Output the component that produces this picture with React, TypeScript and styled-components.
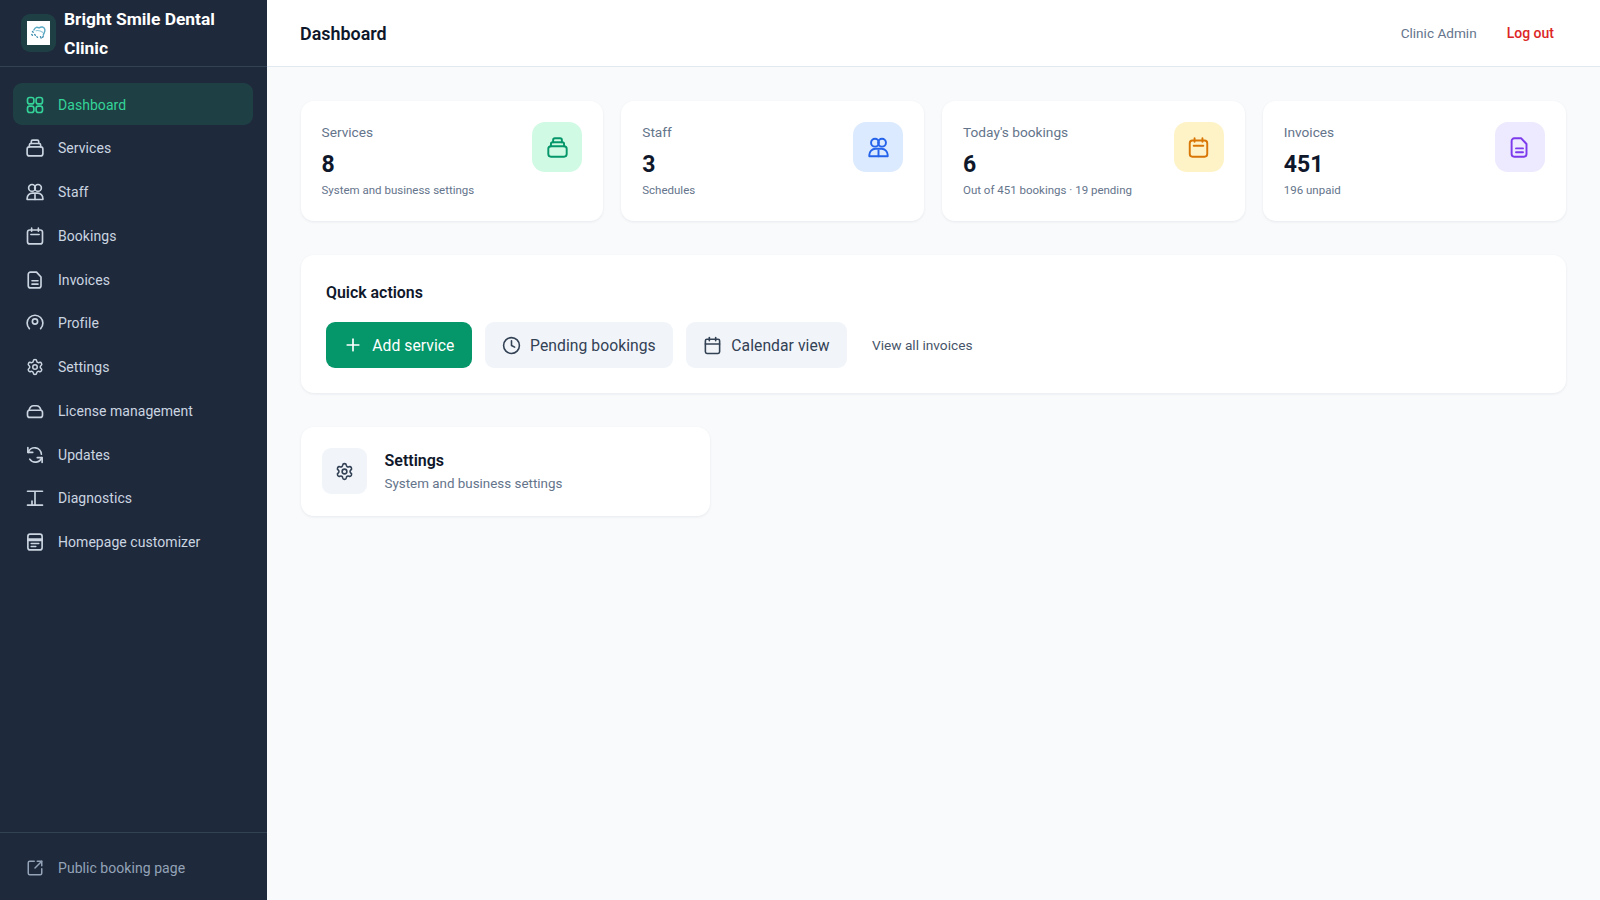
import React from "react";
import styled, { createGlobalStyle } from "styled-components";
import { Plus, Clock, Calendar, Settings as SettingsGear, SquareArrowOutUpRight } from "lucide-react";

const GlobalStyle = createGlobalStyle`
  html, body { margin: 0; padding: 0; height: 100%; }
  body {
    background: #f8fafc;
    font-family: Roboto, "Noto Sans", sans-serif;
    color: #0f172a;
  }
`;

const Shell = styled.div`
  display: flex;
  height: 900px;
  overflow: hidden;
`;

const Sidebar = styled.aside`
  width: 267px;
  flex: none;
  display: flex;
  flex-direction: column;
  background: #1e293b;
`;

const Brand = styled.div`
  height: 67px;
  flex: none;
  box-sizing: border-box;
  display: flex;
  align-items: center;
  gap: 8px;
  padding: 0 21px;
  border-bottom: 1px solid #334155;
`;

const LogoTile = styled.div`
  width: 35px;
  height: 38px;
  flex: none;
  display: flex;
  align-items: center;
  justify-content: center;
  border-radius: 9px;
  background: #1e4044;
`;

const LogoImage = styled.div`
  width: 23px;
  height: 24px;
  display: flex;
  align-items: center;
  justify-content: center;
  background: #fff;
`;

const BrandName = styled.div`
  margin-top: 1px;
  font-size: 17.4px;
  line-height: 29px;
  font-weight: 700;
  color: #fff;
`;

const Nav = styled.nav`
  flex: 1;
  padding: 16px 14px 16px 13px;
  display: flex;
  flex-direction: column;
  gap: 1.76px;
`;

const NavItem = styled.a<{ $active?: boolean }>`
  height: 42px;
  display: flex;
  align-items: center;
  gap: 14px;
  padding: 1px 14px 0 13px;
  box-sizing: border-box;
  border-radius: 9px;
  font-size: 14px;
  font-weight: 400;
  letter-spacing: 0.05px;
  background: ${(p) => (p.$active ? "#1e4044" : "transparent")};
  color: ${(p) => (p.$active ? "#34d399" : "#cbd5e1")};
  svg { flex: none; }
`;

const SidebarFooter = styled.div`
  height: 68px;
  flex: none;
  box-sizing: border-box;
  padding: 13px;
  border-top: 1px solid #334155;
`;

const FooterLink = styled(NavItem)`
  color: #94a3b8;
`;

const Main = styled.div`
  flex: 1;
  min-width: 0;
  display: flex;
  flex-direction: column;
`;

const TopBar = styled.header`
  height: 67px;
  flex: none;
  box-sizing: border-box;
  display: flex;
  align-items: center;
  justify-content: space-between;
  padding: 0 46px 0 33px;
  background: #fff;
  border-bottom: 1px solid #e2e8f0;
`;

const PageTitle = styled.h1`
  margin: 0;
  font-size: 17.9px;
  font-weight: 600;
  color: #0f172a;
`;

const TopActions = styled.div`
  display: flex;
  align-items: center;
  gap: 30px;
  font-size: 13.6px;
`;

const AdminName = styled.span`
  color: #64748b;
`;

const LogOut = styled.a`
  color: #dc2626;
  font-weight: 500;
  font-size: 14px;
`;

const Content = styled.main`
  flex: 1;
  padding: 34px 34.5px 34px 33.5px;
  display: flex;
  flex-direction: column;
  gap: 34px;
`;

const StatGrid = styled.section`
  display: grid;
  grid-template-columns: repeat(4, 1fr);
  gap: 18px;
`;

const Card = styled.div`
  background: #fff;
  border-radius: 13px;
  box-shadow: 0 1px 3px rgba(15, 23, 42, 0.07);
`;

const StatCard = styled(Card)`
  height: 120px;
  box-sizing: border-box;
  padding: 21px;
  display: flex;
  justify-content: space-between;
  align-items: flex-start;
`;

const StatLabel = styled.div`
  font-size: 13.7px;
  line-height: 20px;
  color: #64748b;
`;

const StatValue = styled.div`
  font-size: 23px;
  line-height: 32px;
  margin-top: 7px;
  font-weight: 700;
  color: #0f172a;
`;

const StatHint = styled.div`
  font-size: 11.5px;
  line-height: 16px;
  margin-top: 1px;
  color: #64748b;
`;

const StatIcon = styled.div<{ $bg: string; $fg: string }>`
  width: 50px;
  height: 50px;
  flex: none;
  display: flex;
  align-items: center;
  justify-content: center;
  border-radius: 13px;
  background: ${(p) => p.$bg};
  color: ${(p) => p.$fg};
`;

const QuickCard = styled(Card)`
  height: 138px;
  box-sizing: border-box;
  padding: 25px 25px 25px 25.5px;
`;

const QuickTitle = styled.h2`
  margin: 0 0 17px;
  font-size: 15.9px;
  line-height: 25px;
  font-weight: 600;
  color: #0f172a;
`;

const ActionRow = styled.div`
  display: flex;
  align-items: center;
  gap: 13px;
`;

const ActionButton = styled.a<{ $primary?: boolean }>`
  height: 46px;
  box-sizing: border-box;
  display: flex;
  align-items: center;
  gap: 9px;
  padding: 0 17.3px;
  border-radius: 9px;
  font-size: 15.7px;
  font-weight: 400;
  letter-spacing: 0.05px;
  background: ${(p) => (p.$primary ? "#059669" : "#f1f5f9")};
  color: ${(p) => (p.$primary ? "#fff" : "#334155")};
`;

const TextLink = styled.a`
  margin-left: 12px;
  font-size: 13.7px;
  font-weight: 400;
  color: #475569;
`;

const SettingsCard = styled(Card)`
  width: 409.5px;
  height: 88.5px;
  box-sizing: border-box;
  padding: 0 21px;
  display: flex;
  align-items: center;
  gap: 18px;
`;

const SettingsTile = styled.div`
  width: 45px;
  height: 46px;
  flex: none;
  display: flex;
  align-items: center;
  justify-content: center;
  border-radius: 9px;
  background: #f1f5f9;
  color: #334155;
`;

const SettingsName = styled.div`
  margin-top: 2px;
  font-size: 16px;
  line-height: 22px;
  font-weight: 600;
  color: #0f172a;
`;

const SettingsHint = styled.div`
  margin-top: 1px;
  font-size: 13.4px;
  line-height: 22px;
  color: #64748b;
`;

type IconProps = { size?: number };

const Svg = ({ size = 18, children }: IconProps & { children: React.ReactNode }) => (
  <svg
    width={size}
    height={size}
    viewBox="0 0 24 24"
    fill="none"
    stroke="currentColor"
    strokeWidth={2.2}
    strokeLinecap="round"
    strokeLinejoin="round"
  >
    {children}
  </svg>
);

const GridIcon = (p: IconProps) => (
  <Svg {...p}>
    <rect x="2" y="2" width="8.5" height="8.5" rx="3" />
    <rect x="13.5" y="2" width="8.5" height="8.5" rx="3" />
    <rect x="2" y="13.5" width="8.5" height="8.5" rx="3" />
    <rect x="13.5" y="13.5" width="8.5" height="8.5" rx="3" />
  </Svg>
);

const StackIcon = (p: IconProps) => (
  <Svg {...p}>
    <rect x="1.5" y="10.5" width="21" height="12" rx="3" />
    <path d="M4.5 10.5V8a2 2 0 0 1 2-2h11a2 2 0 0 1 2 2v2.5" />
    <path d="M7 6V3.5a2 2 0 0 1 2-2h6a2 2 0 0 1 2 2V6" />
  </Svg>
);

const PeopleIcon = (p: IconProps) => (
  <Svg {...p}>
    <circle cx="8" cy="6.5" r="4.5" />
    <circle cx="16" cy="6.5" r="4.5" />
    <path d="M1.5 22v-1.5a7 7 0 0 1 7-7h7a7 7 0 0 1 7 7V22Z" />
    <path d="M12 15.5V22" />
  </Svg>
);

const BookingIcon = (p: IconProps) => (
  <Svg {...p}>
    <rect x="2" y="4" width="20" height="18.5" rx="3" />
    <path d="M7.5 1.5v4M16.5 1.5v4M6.5 10h11" />
  </Svg>
);

const InvoiceIcon = (p: IconProps) => (
  <Svg {...p}>
    <path d="M6 1.5h8l6 6.5v11.5a3 3 0 0 1-3 3H6a3 3 0 0 1-3-3v-15a3 3 0 0 1 3-3Z" />
    <path d="M8 13h8M8 17.5h8" />
  </Svg>
);

const ProfileIcon = (p: IconProps) => (
  <Svg {...p}>
    <path d="M4.5 19.5a10.5 10.5 0 1 1 15 0" />
    <circle cx="12" cy="10" r="3.5" />
  </Svg>
);

const LicenseIcon = (p: IconProps) => (
  <Svg {...p}>
    <rect x="2" y="11" width="20" height="9.5" rx="3" />
    <path d="M4 11c1-3.5 3-6 6-6h4c3 0 5 2.5 6 6" />
  </Svg>
);

const UpdatesIcon = (p: IconProps) => (
  <Svg {...p}>
    <path d="M2.5 2v6.5H9" />
    <path d="M3 8.5A9 9 0 0 1 20.5 11" />
    <path d="M21.5 22v-6.5H15" />
    <path d="M21 15.5a9 9 0 0 1-16 2" />
  </Svg>
);

const DiagnosticsIcon = (p: IconProps) => (
  <Svg {...p}>
    <path d="M2 3h20M2 21.5h20M12 3v18.5M8 16v5.5" />
  </Svg>
);

const HomepageIcon = (p: IconProps) => (
  <Svg {...p}>
    <rect x="2.5" y="1.5" width="19" height="21" rx="3" />
    <path d="M2.5 10h19M2.5 8h19M7 14h10M7 18h6" />
  </Svg>
);

const LogoMark = () => (
  <svg width="18" height="16" viewBox="0 0 24 22" fill="none" strokeLinecap="round">
    <path d="M5 7c2-5 5-4 7-3 3-2 7-2 8 2 1 3-1 5-2 7" stroke="#5aa9c4" strokeWidth="2" />
    <path d="M8 8c3-1 6 0 9 2" stroke="#8fc6d8" strokeWidth="1.6" />
    <path d="M3 9l1 1M2 13l1 1M6 13l1 1M9 16l1 1M14 16l1 2M18 15l-1 2" stroke="#3f8fb0" strokeWidth="1.8" />
  </svg>
);

const navItems = [
  { label: "Dashboard", icon: GridIcon, active: true },
  { label: "Services", icon: StackIcon },
  { label: "Staff", icon: PeopleIcon },
  { label: "Bookings", icon: BookingIcon },
  { label: "Invoices", icon: InvoiceIcon },
  { label: "Profile", icon: ProfileIcon },
  { label: "Settings", icon: SettingsGear },
  { label: "License management", icon: LicenseIcon },
  { label: "Updates", icon: UpdatesIcon },
  { label: "Diagnostics", icon: DiagnosticsIcon },
  { label: "Homepage customizer", icon: HomepageIcon },
];

const stats = [
  { label: "Services", value: "8", hint: "System and business settings", icon: StackIcon, bg: "#d1fae5", fg: "#059669" },
  { label: "Staff", value: "3", hint: "Schedules", icon: PeopleIcon, bg: "#dbeafe", fg: "#2563eb" },
  { label: "Today's bookings", value: "6", hint: "Out of 451 bookings · 19 pending", icon: BookingIcon, bg: "#fef3c7", fg: "#d97706" },
  { label: "Invoices", value: "451", hint: "196 unpaid", icon: InvoiceIcon, bg: "#ede9fe", fg: "#7c3aed" },
];

export default function App() {
  return (
    <Shell>
      <GlobalStyle />
      <Sidebar>
        <Brand>
          <LogoTile>
            <LogoImage>
              <LogoMark />
            </LogoImage>
          </LogoTile>
          <BrandName>Bright Smile Dental Clinic</BrandName>
        </Brand>
        <Nav>
          {navItems.map(({ label, icon: Icon, active }) => (
            <NavItem key={label} $active={active}>
              <Icon size={18} />
              {label}
            </NavItem>
          ))}
        </Nav>
        <SidebarFooter>
          <FooterLink>
            <SquareArrowOutUpRight size={18} />
            Public booking page
          </FooterLink>
        </SidebarFooter>
      </Sidebar>
      <Main>
        <TopBar>
          <PageTitle>Dashboard</PageTitle>
          <TopActions>
            <AdminName>Clinic Admin</AdminName>
            <LogOut>Log out</LogOut>
          </TopActions>
        </TopBar>
        <Content>
          <StatGrid>
            {stats.map(({ label, value, hint, icon: Icon, bg, fg }) => (
              <StatCard key={label}>
                <div>
                  <StatLabel>{label}</StatLabel>
                  <StatValue>{value}</StatValue>
                  <StatHint>{hint}</StatHint>
                </div>
                <StatIcon $bg={bg} $fg={fg}>
                  <Icon size={21} />
                </StatIcon>
              </StatCard>
            ))}
          </StatGrid>
          <QuickCard>
            <QuickTitle>Quick actions</QuickTitle>
            <ActionRow>
              <ActionButton $primary>
                <Plus size={20} />
                Add service
              </ActionButton>
              <ActionButton>
                <Clock size={19} />
                Pending bookings
              </ActionButton>
              <ActionButton>
                <Calendar size={19} />
                Calendar view
              </ActionButton>
              <TextLink>View all invoices</TextLink>
            </ActionRow>
          </QuickCard>
          <SettingsCard>
            <SettingsTile>
              <SettingsGear size={19} />
            </SettingsTile>
            <div>
              <SettingsName>Settings</SettingsName>
              <SettingsHint>System and business settings</SettingsHint>
            </div>
          </SettingsCard>
        </Content>
      </Main>
    </Shell>
  );
}
